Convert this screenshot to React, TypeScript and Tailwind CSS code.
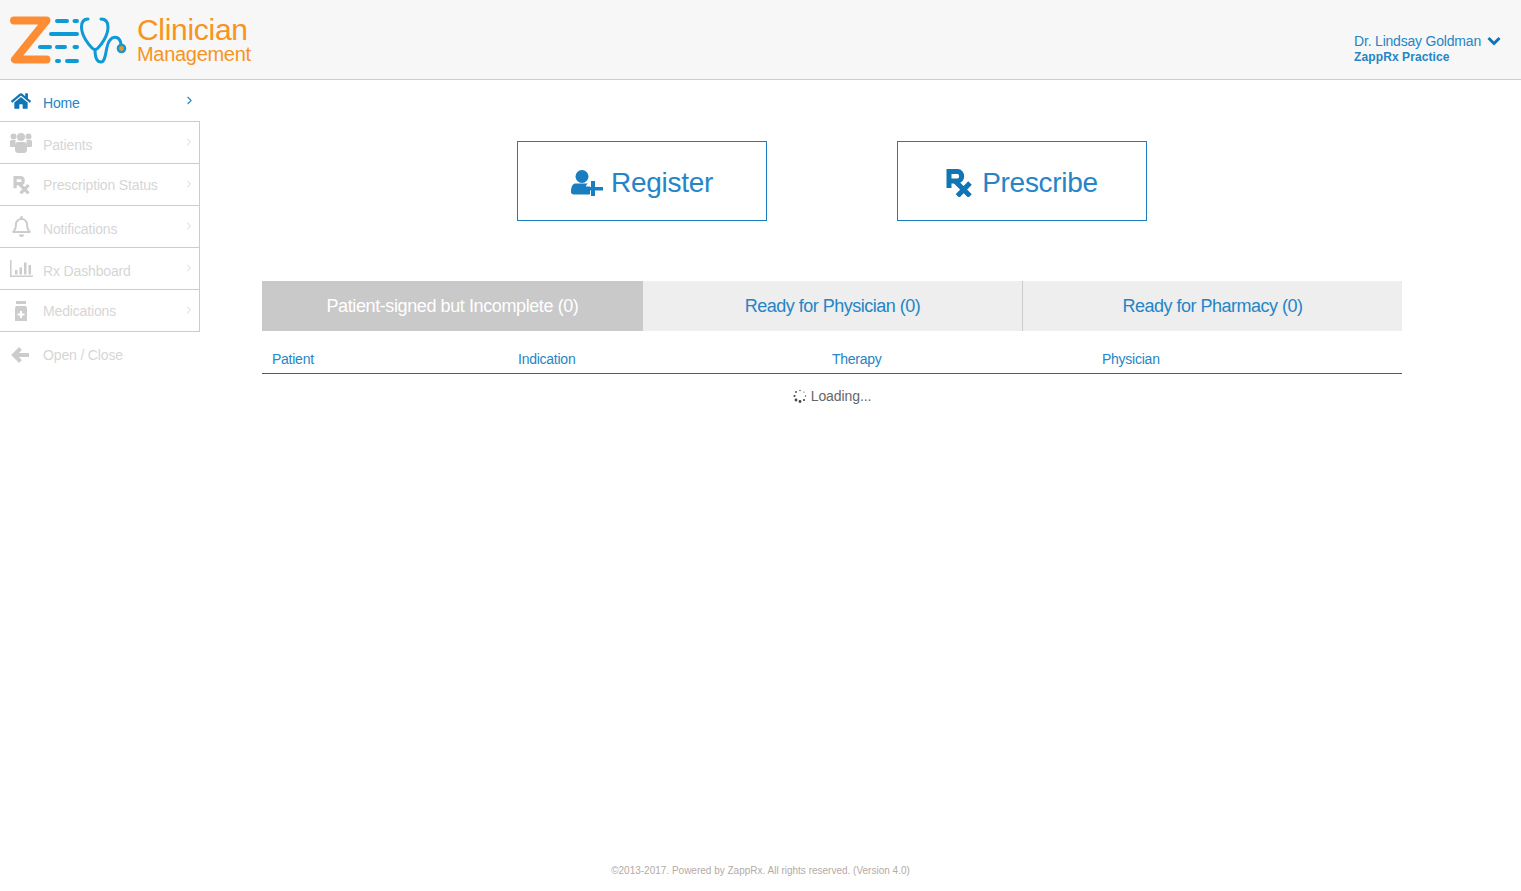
import { ChevronRight } from "lucide-react";
import { FaHome, FaRegBell } from "react-icons/fa";
import type { ReactNode } from "react";

function Logo() {
  return (
    <svg width="120" height="50" viewBox="0 0 120 50" className="shrink-0" fill="none" strokeLinecap="round">
      <path d="M4 5.500H36.500L5 44.500H36.500" stroke="#fd8d35" strokeWidth="8" strokeLinejoin="round" />
      <g stroke="#0d9ad7" strokeWidth="4">
        <path d="M47 6H57M64.500 6H67" />
        <path d="M41 19H67" />
        <path d="M30 32H40M47 32H55M64.500 32H67" />
        <path d="M47 46H49M57 46H67" />
      </g>
      <g stroke="#0d9ad7" strokeWidth="3">
        <path d="M78 4C73 4 71.500 7 71.500 12C71.500 21 79 30 82 33C84 35 86 35 88 33C91 30 98 21 98 12C98 7 96 4 91 4" />
        <path d="M85 34.500C85 42 87 47 91 47C97 47 95 30 100 25C104 20 110 22 111 29" />
        <circle cx="111.500" cy="33.500" r="3.600" fill="#f7941e" strokeWidth="2.400" />
      </g>
    </svg>
  );
}

function RxIcon({ className, color }: { className: string; color: string }) {
  return (
    <svg viewBox="0 0 26 28" className={className} fill="none" stroke={color}>
      <path d="M3 19V2.500H11.500C17 2.500 17 12 11.500 12H3" strokeWidth="5" />
      <path d="M9 12L24 27M24 14L11.500 27" strokeWidth="5" />
    </svg>
  );
}

function PatientsIcon() {
  return (
    <svg width="22" height="20" viewBox="0 0 22 20" fill="#cccccc">
      <circle cx="3.500" cy="3.500" r="3" />
      <circle cx="18.500" cy="3.500" r="3" />
      <circle cx="11" cy="4" r="4" />
      <path d="M0 8.500C0 7.500 1 7 2 7H5.500V14H1C0.500 14 0 13.500 0 13zM22 8.500C22 7.500 21 7 20 7H16.500V14H21C21.500 14 22 13.500 22 13z" />
      <path d="M5 12C5 10 6.500 9 8 9H14C15.500 9 17 10 17 12V17C17 19 15.500 20 14 20H8C6.500 20 5 19 5 17z" />
    </svg>
  );
}

function BarsIcon() {
  return (
    <svg width="23" height="17" viewBox="0 0 23 17" fill="#cccccc">
      <path d="M0 0h1.500v15.500H23V17H0z" />
      <path d="M5 10h2.500v4.500H5zM9.500 7.500H12v7H9.500zM14 2.500h2.500v12H14zM18.500 5H21v9.500h-2.500z" />
    </svg>
  );
}

function BottleIcon() {
  return (
    <svg width="14" height="20" viewBox="0 0 14 20" fill="#cccccc">
      <path d="M2 0h10v3H2z" />
      <path d="M2 5h10l1 2v13H1V7z" />
      <path d="M6 10h2v2.500h2.500v2H8V17H6v-2.500H3.500v-2H6z" fill="#ffffff" />
    </svg>
  );
}

function BackArrowIcon() {
  return (
    <svg width="18" height="16" viewBox="0 0 18 16" fill="none" stroke="#cccccc">
      <path d="M18 8H4M9.500 1.500L3 8L9.500 14.500" strokeWidth="4" />
    </svg>
  );
}

function UserPlusIcon() {
  return (
    <svg width="32" height="26" viewBox="0 0 32 26" fill="#1a7dc0">
      <circle cx="11" cy="6.500" r="6.500" />
      <path d="M0 22C0 16 2 13.500 5 13.500H17C15.500 14.500 15 15.500 15 16.500H19V24.500H3C1 24.500 0 23.500 0 22z" />
      <path d="M20 11H24V17H32V20.500H24V26H20V20.500H14.500V17H20z" />
    </svg>
  );
}

function ChevronDownIcon() {
  return (
    <svg width="14" height="10" viewBox="0 0 14 10" fill="none" stroke="#0f75b5" className="ml-[6px]">
      <path d="M1.500 2L7 7.500L12.500 2" strokeWidth="3" />
    </svg>
  );
}

function SpinnerIcon() {
  const dots = [
    [7, 1.500, 0.7],
    [11, 3, 0.6],
    [12.500, 7, 0.7],
    [11, 11, 1.100],
    [7, 12.500, 1.400],
    [3, 11, 1.400],
    [1.500, 7, 1.100],
    [3, 3, 0.900],
  ];
  return (
    <svg width="14" height="14" viewBox="0 0 14 14" fill="#444444">
      {dots.map(([cx, cy, r]) => (
        <circle key={`${cx}-${cy}`} cx={cx} cy={cy} r={r} />
      ))}
    </svg>
  );
}

type NavItem = { label: string; icon: ReactNode; textClass: string };

const navItems: NavItem[] = [
  { label: "Patients", icon: <PatientsIcon />, textClass: "pt-[4px]" },
  { label: "Prescription Status", icon: <RxIcon className="w-[17px] h-[18px]" color="#cccccc" />, textClass: "" },
  { label: "Notifications", icon: <FaRegBell className="w-[21px] h-[21px] text-[#cccccc]" />, textClass: "pt-[4px]" },
  { label: "Rx Dashboard", icon: <BarsIcon />, textClass: "pt-[4px]" },
  { label: "Medications", icon: <BottleIcon />, textClass: "" },
];

function Sidebar() {
  return (
    <aside className="w-[200px] shrink-0 text-sm tracking-[-0.15px]">
      <a className="flex items-center h-[42px] border-b border-[#cccccc] text-[#2585c6]">
        <span className="w-[43px] flex justify-center pr-[1px]">
          <FaHome className="w-[20px] h-[20px] text-[#0f75b5]" />
        </span>
        <span className="flex-1 pt-[4px]">Home</span>
        <ChevronRight className="w-[13px] h-[13px] mr-[4px] mb-[1px]" />
      </a>
      <div className="border-r border-[#cccccc]">
        {navItems.map((item) => (
          <a key={item.label} className="flex items-center h-[42px] border-b border-[#cccccc] text-[#d6d6d6]">
            <span className="w-[43px] flex justify-center pr-[1px]">{item.icon}</span>
            <span className={`flex-1 ${item.textClass}`}>{item.label}</span>
            <ChevronRight className="w-[12px] h-[12px] mr-[4px] mb-[2px]" />
          </a>
        ))}
      </div>
      <a className="flex items-center h-[46px] text-[#d6d6d6]">
        <span className="w-[43px] flex justify-center pr-[3px]">
          <BackArrowIcon />
        </span>
        <span className="flex-1">Open / Close</span>
      </a>
    </aside>
  );
}

export default function App() {
  return (
    <div className="min-h-[891px] flex flex-col bg-white font-['Liberation_Sans',Arial,sans-serif]">
      <header className="h-[80px] shrink-0 flex items-center justify-between bg-[#f7f7f7] border-b border-[#cccccc] pl-[10px] pr-[20px]">
        <div className="flex items-center">
          <Logo />
          <div className="ml-[7px] text-[#f7941e] tracking-[-0.3px]">
            <div className="text-[30px] leading-[30px]">Clinician</div>
            <div className="text-[20px] leading-[20px] -mt-[1px] mb-[1px]">Management</div>
          </div>
        </div>
        <div className="text-[#2585c6] mt-[19px]">
          <div className="flex items-center text-sm leading-[16px] tracking-[-0.2px]">
            Dr. Lindsay Goldman
            <ChevronDownIcon />
          </div>
          <div className="text-[12px] leading-[16px] font-bold tracking-[0.1px]">ZappRx Practice</div>
        </div>
      </header>

      <div className="flex-1 flex">
        <Sidebar />
        <main className="flex-1 pl-[62px] pr-[119px] pt-[61px]">
          <div className="flex justify-center gap-[130px]">
            <button className="w-[250px] h-[80px] pt-[4px] flex items-center justify-center gap-[8px] border border-[#1a7dc0] text-[28px] tracking-[-0.3px] text-[#2585c6]">
              <UserPlusIcon />
              Register
            </button>
            <button className="w-[250px] h-[80px] pt-[4px] flex items-center justify-center gap-[10px] border border-[#1a7dc0] text-[28px] tracking-[-0.3px] text-[#2585c6]">
              <RxIcon className="w-[26px] h-[28px]" color="#0f75b5" />
              Prescribe
            </button>
          </div>

          <div className="grid grid-cols-[381px_379px_380px] mt-[60px] text-lg tracking-[-0.5px]">
            <div className="h-[50px] flex items-center justify-center bg-[#c9c9c9] text-white tracking-[-0.4px]">Patient-signed but Incomplete (0)</div>
            <div className="h-[50px] flex items-center justify-center bg-[#eeeeee] text-[#2585c6]">Ready for Physician (0)</div>
            <div className="h-[50px] flex items-center justify-center bg-[#eeeeee] text-[#2585c6] border-l border-[#cccccc]">Ready for Pharmacy (0)</div>
          </div>

          <div className="flex items-end h-[43px] border-b border-[#1a6fa8] pb-[4px] text-sm tracking-[-0.25px] text-[#2585c6]">
            <div className="w-[256px] pl-[10px]">Patient</div>
            <div className="w-[314px]">Indication</div>
            <div className="w-[270px]">Therapy</div>
            <div>Physician</div>
          </div>

          <div className="flex items-center justify-center gap-[4px] pt-[12px] text-sm tracking-[-0.1px] text-[#666666]">
            <SpinnerIcon />
            Loading...
          </div>
        </main>
      </div>

      <footer className="h-[28px] shrink-0 text-center text-[10px] text-[#b5aaa5]">
        ©2013-2017. Powered by ZappRx. All rights reserved. (Version 4.0)
      </footer>
    </div>
  );
}
